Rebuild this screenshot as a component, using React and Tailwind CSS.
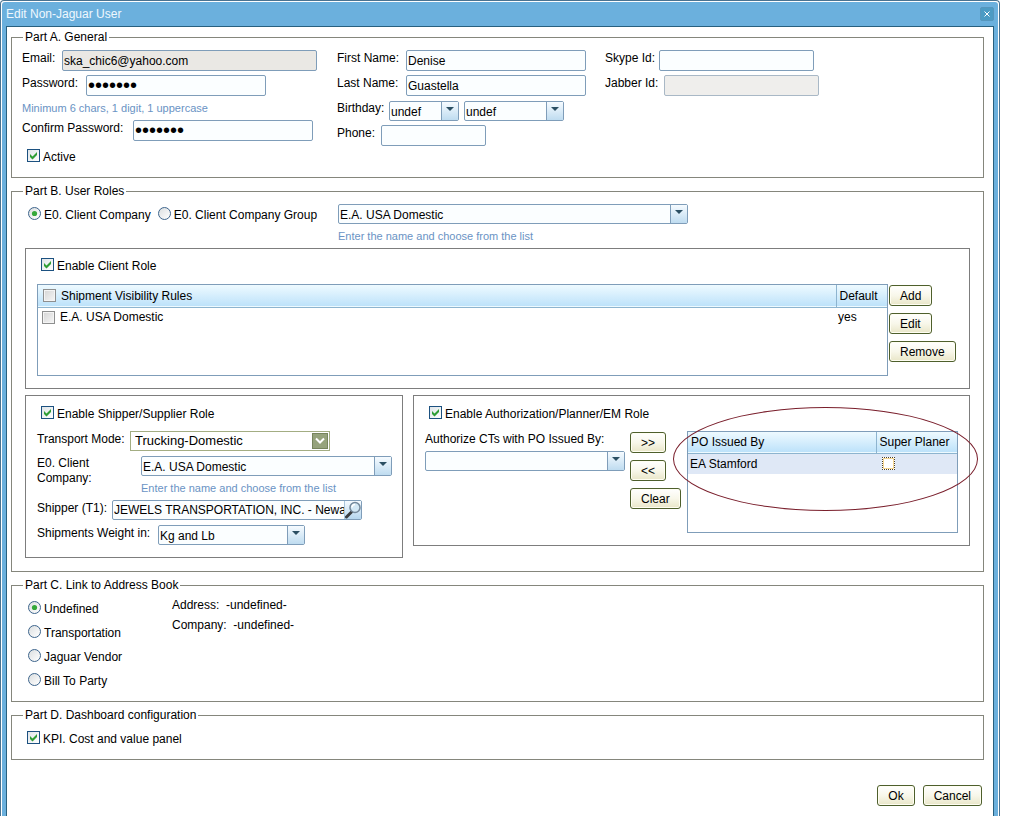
import clsx from 'clsx'

const fieldClass = 'h-[21px] rounded-[2px] border border-[#7f9db9] px-px text-black outline-none'

function Part({ title, className, children }) {
  return (
    <fieldset className="border border-[#85867c]">
      <legend className="ml-[11px] h-4 px-[2px]">{title}</legend>
      <div className={className}>{children}</div>
    </fieldset>
  )
}

function Row({ label, htmlFor, labelWidth, className, children }) {
  return (
    <div className={clsx('flex items-start', className || 'h-[25px]')}>
      <label htmlFor={htmlFor} className={clsx('shrink-0', labelWidth)}>{label}</label>
      {children}
    </div>
  )
}

function TextInput({ className, ...props }) {
  return (
    <input
      type="text"
      className={clsx(fieldClass, 'bg-[#fbfeff] disabled:border-[#a9b8c6] disabled:bg-[#efeeec] read-only:bg-[#eae8e4]', className)}
      {...props}
    />
  )
}

function PasswordInput(props) {
  return (
    <input
      type="password"
      className={clsx(fieldClass, 'w-[180px] bg-[#fbfeff] text-[20px]')}
      {...props}
    />
  )
}

function Combo({ options, className, ...props }) {
  return (
    <div className={clsx('relative h-5 rounded-[2px] border border-[#7f9db9] bg-[#fbfeff]', className)}>
      <select className="h-full w-full appearance-none pt-px pr-5 pl-px outline-none" {...props}>
        {options.map(o => <option key={o}>{o}</option>)}
      </select>
      <span className="pointer-events-none absolute inset-y-0 right-0 flex w-[17px] justify-center border-l border-[#7f9db9] bg-linear-to-b from-[#f6fbff] to-[#bfdcf0] pt-[5px]">
        <svg width="8" height="4" viewBox="0 0 8 4"><path d="M0 0h8L4 4z" fill="#2b4f63" /></svg>
      </span>
    </div>
  )
}

function Check({ variant, ...props }) {
  return (
    <span className="grid size-[13px] shrink-0">
      <input
        type="checkbox"
        className={clsx(
          'peer col-start-1 row-start-1 size-[13px] appearance-none border',
          variant === 'muted' && 'border-[#8e8f8f] bg-linear-to-br from-[#d5d5d5] to-[#f6f6f6] shadow-[inset_0_0_0_1px_#f4f4f4]',
          variant === 'focus' && 'border-dotted border-[#4a4030] bg-white shadow-[inset_0_0_0_1px_#f5d691]',
          !variant && 'border-[#1c5180] bg-linear-to-br from-[#dfe5e8] to-white'
        )}
        {...props}
      />
      <svg viewBox="0 0 13 13" className="pointer-events-none invisible col-start-1 row-start-1 size-[13px] peer-checked:visible">
        <path d="M3 5v3l2.5 2.5L10 6V3L5.500 7.500z" fill="#2f9e35" />
      </svg>
    </span>
  )
}

function CheckField({ label, className, ...props }) {
  return (
    <label className={clsx('flex w-fit', className || 'items-start gap-[3px]')}>
      <Check {...props} />
      <span>{label}</span>
    </label>
  )
}

function RadioField({ label, ...props }) {
  return (
    <label className="flex w-fit items-start gap-[3px]">
      <span className="grid size-[13px] shrink-0">
        <input
          type="radio"
          className="peer col-start-1 row-start-1 size-[13px] appearance-none rounded-full border border-[#3d648c] bg-linear-to-br from-[#dcdfe0] to-white"
          {...props}
        />
        <svg viewBox="0 0 13 13" className="pointer-events-none invisible col-start-1 row-start-1 size-[13px] peer-checked:visible">
          <circle cx="6.500" cy="6.500" r="2.600" fill="#35a83a" />
        </svg>
      </span>
      <span>{label}</span>
    </label>
  )
}

function Button({ children }) {
  return (
    <button
      type="button"
      className="h-[21px] rounded-[3px] border border-[#4e5f2c] bg-linear-to-b from-white via-[#f8f7ea] to-[#e9e6c8] px-[10px] shadow-[inset_0_0_0_1px_#fffef2]"
    >
      {children}
    </button>
  )
}

const headRow = 'border-b border-[#8db4cf] bg-linear-to-b from-[#eefaff] to-[#bde2fa] text-left'

function General() {
  return (
    <Part title="Part A. General" className="grid grid-cols-[315px_268px_1fr] pt-[5px] pr-2 pb-3 pl-[10px]">
      <div>
        <Row label="Email:" htmlFor="email" labelWidth="w-10">
          <TextInput id="email" readOnly defaultValue="ska_chic6@yahoo.com" className="w-[255px]" />
        </Row>
        <Row label="Password:" htmlFor="password" labelWidth="w-16">
          <PasswordInput id="password" defaultValue="Abcdef1" />
        </Row>
        <p className="h-5 text-[11px] text-[#6a93c4]">Minimum 6 chars, 1 digit, 1 uppercase</p>
        <Row label="Confirm Password:" htmlFor="confirm" labelWidth="w-[111px]">
          <PasswordInput id="confirm" defaultValue="Abcdef1" />
        </Row>
        <CheckField label="Active" className="mt-1 ml-[5px] items-start gap-[3px]" defaultChecked />
      </div>
      <div>
        <Row label="First Name:" htmlFor="first" labelWidth="w-[69px]">
          <TextInput id="first" defaultValue="Denise" className="w-[180px]" />
        </Row>
        <Row label="Last Name:" htmlFor="last" labelWidth="w-[69px]">
          <TextInput id="last" defaultValue="Guastella" className="w-[180px]" />
        </Row>
        <Row label="Birthday:" htmlFor="month" labelWidth="w-[52px]">
          <Combo id="month" options={['undef']} className="mt-px w-[70px]" />
          <Combo aria-label="Day" options={['undef']} className="mt-px ml-[5px] w-[100px]" />
        </Row>
        <Row label="Phone:" htmlFor="phone" labelWidth="w-11">
          <TextInput id="phone" className="w-[105px]" />
        </Row>
      </div>
      <div>
        <Row label="Skype Id:" htmlFor="skype" labelWidth="w-[54px]">
          <TextInput id="skype" className="w-[155px]" />
        </Row>
        <Row label="Jabber Id:" htmlFor="jabber" labelWidth="w-[59px]">
          <TextInput id="jabber" disabled className="w-[155px]" />
        </Row>
      </div>
    </Part>
  )
}

function ClientRole() {
  return (
    <section className="border border-[#7d7d7d] pt-[9px] pb-3 pl-[11px]">
      <CheckField label="Enable Client Role" className="ml-1 items-start gap-[3px]" defaultChecked />
      <div className="mt-[10px] flex gap-px">
        <div className="h-[92px] flex-1 border border-[#7f9db9]">
          <table className="w-full table-fixed border-collapse">
            <thead>
              <tr className={headRow}>
                <th className="h-[22px] p-0 pl-[5px] font-normal">
                  <CheckField label="Shipment Visibility Rules" variant="muted" className="items-center gap-[5px]" />
                </th>
                <th className="w-[51px] border-l border-[#8db4cf] p-0 pl-[3px] font-normal">Default</th>
              </tr>
            </thead>
            <tbody>
              <tr>
                <td className="h-5 p-0 pl-1">
                  <CheckField label="E.A. USA Domestic" variant="muted" className="items-center gap-[5px]" />
                </td>
                <td className="p-0 pl-[2px]">yes</td>
              </tr>
            </tbody>
          </table>
        </div>
        <div className="flex w-20 flex-col items-start gap-[7px] pt-px">
          <Button>Add</Button>
          <Button>Edit</Button>
          <Button>Remove</Button>
        </div>
      </div>
    </section>
  )
}

function ShipperRole() {
  return (
    <section className="w-[378px] shrink-0 border border-[#7d7d7d] pt-[10px] pb-3 pl-[11px]">
      <CheckField label="Enable Shipper/Supplier Role" className="mb-[9px] ml-1 items-start gap-[3px]" defaultChecked />
      <Row label="Transport Mode:" htmlFor="mode" labelWidth="w-[93px]">
        <div className="relative h-5 w-[200px] border border-[#a3ad83] bg-white">
          <select id="mode" className="h-full w-full appearance-none pl-1 text-[13px] outline-none">
            <option>Trucking-Domestic</option>
          </select>
          <span className="pointer-events-none absolute top-px right-px flex size-4 items-center justify-center border border-[#76845c] bg-[#96a37c]">
            <svg width="10" height="8" viewBox="0 0 10 8" fill="none">
              <path d="M1 1.500l4 4 4-4" stroke="#fff" strokeWidth="2" />
            </svg>
          </span>
        </div>
      </Row>
      <Row label="E0. Client Company:" htmlFor="shipperClient" labelWidth="w-[104px] pr-8 leading-[15px]" className="h-11">
        <div>
          <Combo id="shipperClient" options={['E.A. USA Domestic']} className="w-[251px]" />
          <p className="pt-1 text-[11px] text-[#6a93c4]">Enter the name and choose from the list</p>
        </div>
      </Row>
      <Row label="Shipper (T1):" htmlFor="shipper" labelWidth="w-[75px]">
        <div className="flex h-5 w-[250px] rounded-[2px] border border-[#7f9db9] bg-[#fbfeff]">
          <input
            id="shipper"
            type="text"
            defaultValue="JEWELS TRANSPORTATION, INC. - Newark"
            className="min-w-0 flex-1 pl-px outline-none"
          />
          <button type="button" aria-label="Search shipper" className="w-[17px] border-l border-[#a9c6dc] bg-linear-to-b from-[#f6fbff] to-[#b5d6ee]">
            <svg width="16" height="18" viewBox="0 0 16 18" fill="none">
              <path d="M1.500 16l5-5" stroke="#3c3f42" strokeWidth="3" strokeLinecap="round" />
              <circle cx="10" cy="6.500" r="5" fill="#d3e8f5" stroke="#75899b" strokeWidth="1.500" />
              <path d="M7 6.500a3 3 0 0 1 3-3" stroke="#fff" strokeWidth="1.500" />
            </svg>
          </button>
        </div>
      </Row>
      <Row label="Shipments Weight in:" htmlFor="weight" labelWidth="w-[121px]" className="h-5">
        <Combo id="weight" options={['Kg and Lb']} className="w-[147px]" />
      </Row>
    </section>
  )
}

function PlannerRole() {
  return (
    <section className="flex-1 border border-[#7d7d7d] pt-[10px] pr-[11px] pb-3 pl-[11px]">
      <CheckField label="Enable Authorization/Planner/EM Role" className="mb-[9px] ml-1 items-start gap-[3px]" defaultChecked />
      <div className="flex gap-[5px]">
        <div className="w-[200px] shrink-0">
          <label htmlFor="po" className="block h-5">Authorize CTs with PO Issued By:</label>
          <Combo id="po" options={['']} />
        </div>
        <div className="flex w-[52px] shrink-0 flex-col items-start gap-[7px] pt-px">
          <Button>&gt;&gt;</Button>
          <Button>&lt;&lt;</Button>
          <Button>Clear</Button>
        </div>
        <div className="relative h-[102px] flex-1 border border-[#7f9db9]">
          <table className="w-full table-fixed border-collapse">
            <thead>
              <tr className={headRow}>
                <th className="h-[21px] p-0 pl-[3px] font-normal">PO Issued By</th>
                <th className="w-[81px] border-l border-[#8db4cf] p-0 pl-[3px] font-normal">Super Planer</th>
              </tr>
            </thead>
            <tbody>
              <tr className="bg-[#dfe8f6]">
                <td className="h-[21px] p-0 pl-[2px]">EA Stamford</td>
                <td className="p-0 pl-[6px]"><Check variant="focus" aria-label="Super Planer" /></td>
              </tr>
            </tbody>
          </table>
          <div className="pointer-events-none absolute -top-[25px] -left-[15px] h-[104px] w-[305px] rounded-[50%] border border-[#7a1f2c]" />
        </div>
      </div>
    </section>
  )
}

function UserRoles() {
  return (
    <Part title="Part B. User Roles" className="pt-[5px] pr-[13px] pb-[13px] pl-[13px]">
      <div className="flex items-start">
        <div className="flex w-[313px] gap-[7px] pt-[3px] pl-[3px]">
          <RadioField name="client" label="E0. Client Company" defaultChecked />
          <RadioField name="client" label="E0. Client Company Group" />
        </div>
        <div>
          <Combo aria-label="Client company" options={['E.A. USA Domestic']} className="w-[350px]" />
          <p className="h-6 pt-1 text-[11px] text-[#6a93c4]">Enter the name and choose from the list</p>
        </div>
      </div>
      <div className="flex flex-col gap-[6px]">
        <ClientRole />
        <div className="flex items-start gap-[10px]">
          <ShipperRole />
          <PlannerRole />
        </div>
      </div>
    </Part>
  )
}

function AddressBook() {
  return (
    <Part title="Part C. Link to Address Book" className="flex pt-1 pb-3 pl-4">
      <div className="flex w-[144px] flex-col gap-2 pt-1">
        <RadioField name="link" label="Undefined" defaultChecked />
        <RadioField name="link" label="Transportation" />
        <RadioField name="link" label="Jaguar Vendor" />
        <RadioField name="link" label="Bill To Party" />
      </div>
      <div className="flex flex-col gap-1">
        <p>Address: &nbsp;-undefined-</p>
        <p>Company: &nbsp;-undefined-</p>
      </div>
    </Part>
  )
}

export default function App() {
  return (
    <div className="min-h-screen bg-white pr-[13px] font-['Liberation_Sans',Arial,sans-serif] text-[12px] leading-4 text-black">
      <div className="flex min-h-screen flex-col rounded-t-[4px] border border-b-0 border-[#4a7391] bg-white p-px pb-0">
        <div className="flex flex-1 flex-col rounded-t-[3px] bg-[#6bb0dd] px-1">
          <header className="flex h-6 items-center justify-between">
            <h1 className="text-[#f0f8fd]">Edit Non-Jaguar User</h1>
            <button type="button" aria-label="Close" className="flex size-[14px] items-center justify-center rounded-[2px] border border-[#5596bd] bg-[#4c9bc4]">
              <svg width="6" height="6" viewBox="0 0 6 6"><path d="M.5.5l5 5m0-5l-5 5" stroke="#fff" /></svg>
            </button>
          </header>
          <main className="flex flex-1 flex-col gap-[5px] border border-b-0 border-[#28607f] bg-white pt-[2px] pr-[9px] pl-1">
            <General />
            <UserRoles />
            <AddressBook />
            <Part title="Part D. Dashboard configuration" className="pt-2 pb-3 pl-[15px]">
              <CheckField label="KPI. Cost and value panel" defaultChecked />
            </Part>
            <footer className="mt-5 flex justify-end gap-2 pr-[2px]">
              <Button>Ok</Button>
              <Button>Cancel</Button>
            </footer>
          </main>
        </div>
      </div>
    </div>
  )
}
